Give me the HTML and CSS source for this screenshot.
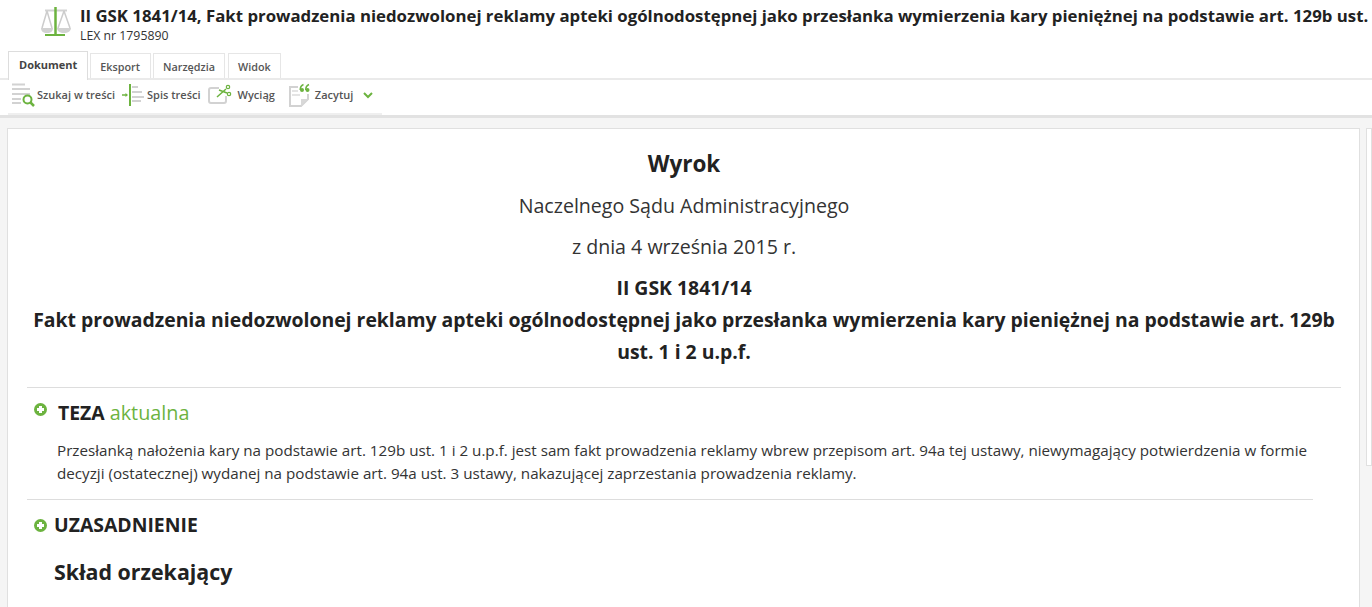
FILE: index.html
```html
<!DOCTYPE html>
<html lang="pl">
<head>
  <meta charset="UTF-8">
  <title>II GSK 1841/14</title>
  <link rel="stylesheet" href="styles.css">
</head>
<body>

  <div class="header">
    <svg class="scales" width="32" height="32" viewBox="0 0 32 32" fill="none">
      <path d="M5 4.500h22" stroke="#d2d2d2" stroke-width="2"/>
      <path d="M7 5 2 22M7 5l5 17M24 5l-6 17M24 5l6 17" stroke="#cccccc" stroke-width="1.500"/>
      <path d="M1 22h12c0 3-2 5-6 5s-6-2-6-5zM17 22h14c0 3-3 5-7 5s-7-2-7-5z" fill="#d2d2d2"/>
      <path d="M15.500 1v28" stroke="#6cb33f" stroke-width="2.500"/>
      <path d="M5 29h20" stroke="#6cb33f" stroke-width="2"/>
    </svg>
    <div class="header-text">
      <div class="doc-title">II GSK 1841/14, Fakt prowadzenia niedozwolonej reklamy apteki ogólnodostępnej jako przesłanka wymierzenia kary pieniężnej na podstawie art. 129b ust. 1 i 2 u.p.f.</div>
      <div class="doc-nr">LEX nr 1795890</div>
    </div>
  </div>

  <div class="tabs">
    <span class="tab active">Dokument</span>
    <span class="tab tab-export">Eksport</span>
    <span class="tab">Narzędzia</span>
    <span class="tab">Widok</span>
  </div>

  <div class="toolbar-wrap">
    <div class="toolbar">
      <span class="tool tool-search">
        <svg width="24" height="24" viewBox="0 0 24 24" fill="none">
          <path d="M1 1.500h13M1 6h18M1 11h18M1 16h9M1 20h9" stroke="#d2d2d2" stroke-width="2"/>
          <circle cx="16.500" cy="16.500" r="4" stroke="#6cb33f" stroke-width="2"/>
          <path d="m19.500 19.500 3.500 3.500" stroke="#6cb33f" stroke-width="2.500"/>
        </svg>
        Szukaj w treści
      </span>
      <span class="tool tool-toc">
        <svg width="24" height="24" viewBox="0 0 24 24" fill="none">
          <path d="M0 12h4" stroke="#6cb33f" stroke-width="1.500"/>
          <path d="m3.500 10 2.500 2-2.500 2z" fill="#6cb33f"/>
          <path d="M8 1v22" stroke="#6cb33f" stroke-width="2"/>
          <path d="M10 4h6M10 9h10M10 14h12M10 18h9" stroke="#d2d2d2" stroke-width="2"/>
        </svg>
        Spis treści
      </span>
      <span class="tool tool-extract">
        <svg width="24" height="22" viewBox="0 0 24 22" fill="none">
          <path d="M11 4H3a2 2 0 0 0-2 2v11a2 2 0 0 0 2 2h13a2 2 0 0 0 2-2v-5" stroke="#d2d2d2" stroke-width="2"/>
          <path d="m9 13 9-8M11 6l8 3" stroke="#6cb33f" stroke-width="1.500"/>
          <circle cx="20" cy="3" r="1.700" stroke="#6cb33f" stroke-width="1.200"/>
          <circle cx="21" cy="10" r="1.700" stroke="#6cb33f" stroke-width="1.200"/>
        </svg>
        Wyciąg
      </span>
      <span class="tool tool-quote">
        <svg width="22" height="24" viewBox="0 0 22 24" fill="none">
          <path d="M9 4H1v19h11l7-7v-5" stroke="#d2d2d2" stroke-width="2"/>
          <path d="M12 23v-7h7z" fill="#d8d8d8"/>
          <path d="M3 8h6M3 12h8" stroke="#e4e4e4" stroke-width="2"/>
          <circle cx="13" cy="7" r="2" fill="#6cb33f"/>
          <circle cx="18.500" cy="7" r="2" fill="#6cb33f"/>
          <path d="M11.200 7c0-2.500 1-4.500 3.300-5.500M16.700 7c0-2.500 1-4.500 3.300-5.500" stroke="#6cb33f" stroke-width="1.500"/>
        </svg>
        Zacytuj
      </span>
      <svg class="chevron" width="10" height="7" viewBox="0 0 10 7" fill="none">
        <path d="m1 1 4 4 4-4" stroke="#6cb33f" stroke-width="2"/>
      </svg>
    </div>
  </div>

  <div class="main">
    <div class="doc">
      <div class="doc-head">
        <div class="h-wyrok">Wyrok</div>
        <div class="h-line h-court">Naczelnego Sądu Administracyjnego</div>
        <div class="h-line h-date">z dnia 4 września 2015 r.</div>
        <div class="h-bold h-sig">II GSK 1841/14</div>
        <div class="h-bold">Fakt prowadzenia niedozwolonej reklamy apteki ogólnodostępnej jako przesłanka wymierzenia kary pieniężnej na podstawie art. 129b ust. 1 i 2 u.p.f.</div>
      </div>

      <div class="teza">
        <div class="section-row teza-row">
          <span class="plus"></span>
          <h2 class="teza-title">TEZA <span class="green">aktualna</span></h2>
        </div>
        <p class="teza-text">Przesłanką nałożenia kary na podstawie art. 129b ust. 1 i 2 u.p.f. jest sam fakt prowadzenia reklamy wbrew przepisom art. 94a tej ustawy, niewymagający potwierdzenia w formie decyzji (ostatecznej) wydanej na podstawie art. 94a ust. 3 ustawy, nakazującej zaprzestania prowadzenia reklamy.</p>
      </div>

      <div class="uzasadnienie">
        <div class="section-row">
          <span class="plus"></span>
          <h2 class="uz-title">UZASADNIENIE</h2>
        </div>
        <h3 class="sklad">Skład orzekający</h3>
        <p class="sklad-text">Przewodniczący: Sędzia NSA Małgorzata Korycińska (spr.)</p>
      </div>
    </div>
    <div class="side"></div>
  </div>

</body>
</html>
```

FILE: styles.css
```css
html, body { height: 607px; overflow: hidden; }
body { margin: 0; background: #fff; font-family: "Open Sans", sans-serif; color: #222; }

.header { display: flex; height: 50px; padding-left: 40px; box-sizing: border-box; overflow: hidden; }
.scales { margin-top: 6px; margin-right: 8px; flex: none; }
.header-text { padding-top: 5px; min-width: 0; flex: 1; }
.doc-title { font-size: 16.8px; font-weight: 700; line-height: 22px; white-space: nowrap; overflow: hidden; color: #222; }
.doc-nr { font-size: 12.3px; line-height: 18px; color: #333; }

.tabs { display: flex; align-items: flex-end; gap: 2px; height: 28px; padding-left: 8px; border-bottom: 2px solid #eaeaea; }
.tab { font-size: 10.8px; font-weight: 600; color: #555; padding: 0 9px; height: 25px; line-height: 26px; border: 1px solid #e6e6e6; border-bottom: none; box-sizing: border-box; }
.tab:last-child { margin-left: 1px; }
.tab-export { padding-right: 10px; }
.tab.active { height: 29px; line-height: 25px; padding: 0 10px; margin-bottom: -2px; font-size: 11px; color: #444; font-weight: 700; border-color: #ddd; background: #fff; }

.toolbar-wrap { height: 35px; border-bottom: 3px solid #e2e2e2; }
.toolbar { display: flex; align-items: center; width: 374px; height: 35px; margin-left: 8px; padding-left: 3px; padding-bottom: 4px; border-bottom: 2px solid #efefef; box-sizing: border-box; }
.tool { display: flex; align-items: center; font-size: 11px; font-weight: 600; color: #555; white-space: nowrap; }
.tool-search svg { margin-right: 2px; }
.tool-toc { margin-left: 7px; }
.tool-toc svg { margin-right: 1px; }
.tool-extract { margin-left: 7px; }
.tool-extract svg { margin-right: 6px; }
.tool-quote { margin-left: 14px; }
.tool-quote svg { margin-right: 4px; }
.chevron { margin-left: 10px; margin-top: 2px; }

.main { display: flex; align-items: flex-start; gap: 6px; padding: 10px 0 0 7px; background: #f5f5f5; }
.doc { width: 1353px; height: 520px; flex: none; background: #fff; border: 1px solid #e0e0e0; box-sizing: border-box; padding: 0 18px 0 19px; }
.side { flex: 1; height: 338px; background: #fff; border: 1px solid #e0e0e0; box-sizing: border-box; }

.doc-head { text-align: center; padding-top: 20px; padding-bottom: 19px; border-bottom: 1px solid #ddd; }
.h-wyrok { font-size: 22.5px; font-weight: 700; line-height: 30px; color: #222; }
.h-line { font-size: 19.6px; line-height: 41px; color: #333; }
.h-court { margin-top: 6px; }
.h-bold { font-size: 19.4px; font-weight: 700; line-height: 32px; color: #222; padding: 0 5px; }
.h-sig { margin-top: 5px; }

.section-row { display: flex; align-items: center; gap: 7px; }
.plus { width: 13px; height: 13px; border-radius: 50%; background: #6cb33f; position: relative; flex: none; }
.plus::before { content: ""; position: absolute; left: 3px; top: 5px; width: 7px; height: 3px; background: #fff; }
.plus::after { content: ""; position: absolute; left: 5px; top: 3px; width: 3px; height: 7px; background: #fff; }

.teza { border-bottom: 1px solid #ddd; width: 1286px; padding-bottom: 14px; }
.teza-row { padding: 12px 0 0 7px; gap: 11px; }
.teza-row .plus { align-self: flex-start; margin-top: 3px; }
h2 { margin: 0; font-size: 19.4px; line-height: 26px; font-weight: 700; color: #222; }
.teza-title .green { font-size: 19.8px; font-weight: 400; color: #6cb33f; }
.teza-text { margin: 13px 0 0 30px; font-size: 15.2px; line-height: 23px; color: #333; }

.uzasadnienie { padding-left: 7px; }
.uzasadnienie .section-row { padding-top: 12px; }
.sklad { margin: 19px 0 0 20px; font-size: 21.4px; font-weight: 700; line-height: 30px; color: #222; }
.sklad-text { margin: 16px 0 0 20px; font-size: 15.2px; line-height: 23px; color: #333; }
```
